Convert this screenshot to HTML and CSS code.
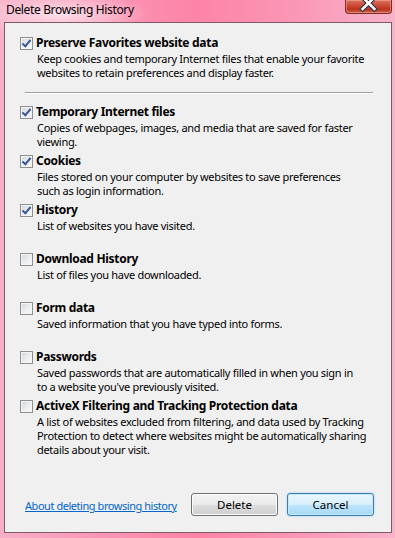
FILE: index.html
```html
<!DOCTYPE html>
<html lang="en">
<head>
    <meta charset="UTF-8">
    <title>Delete Browsing History</title>
    <link rel="stylesheet" href="styles.css">
</head>
<body>
    <div class="window">
        <div class="titlebar">
            <span class="title">Delete Browsing History</span>
            <button class="close-btn" aria-label="Close">
                <svg width="46" height="14" viewBox="0 0 46 14">
                    <path d="M17 -3 L29 9 M29 -3 L17 9" stroke="#3a3a48" stroke-width="5" stroke-linecap="square"/>
                    <path d="M17 -3 L29 9 M29 -3 L17 9" stroke="#fff" stroke-width="2.6" stroke-linecap="square"/>
                </svg>
            </button>
        </div>

        <div class="client">
            <div class="option">
                <label class="option-label"><span class="box checked"></span>Preserve Favorites website data</label>
                <p class="option-desc">Keep cookies and temporary Internet files that enable your favorite<br>websites to retain preferences and display faster.</p>
            </div>

            <hr class="separator">

            <div class="option">
                <label class="option-label"><span class="box checked"></span>Temporary Internet files</label>
                <p class="option-desc">Copies of webpages, images, and media that are saved for faster<br>viewing.</p>
            </div>
            <div class="option">
                <label class="option-label"><span class="box checked"></span>Cookies</label>
                <p class="option-desc">Files stored on your computer by websites to save preferences<br>such as login information.</p>
            </div>
            <div class="option">
                <label class="option-label"><span class="box checked"></span>History</label>
                <p class="option-desc">List of websites you have visited.</p>
            </div>
            <div class="option">
                <label class="option-label"><span class="box"></span>Download History</label>
                <p class="option-desc">List of files you have downloaded.</p>
            </div>
            <div class="option">
                <label class="option-label"><span class="box"></span>Form data</label>
                <p class="option-desc">Saved information that you have typed into forms.</p>
            </div>
            <div class="option">
                <label class="option-label"><span class="box"></span>Passwords</label>
                <p class="option-desc">Saved passwords that are automatically filled in when you sign in<br>to a website you've previously visited.</p>
            </div>
            <div class="option">
                <label class="option-label"><span class="box"></span>ActiveX Filtering and Tracking Protection data</label>
                <p class="option-desc">A list of websites excluded from filtering, and data used by Tracking<br>Protection to detect where websites might be automatically sharing<br>details about your visit.</p>
            </div>

            <div class="footer">
                <a href="#" class="help-link">About deleting browsing history</a>
                <div class="buttons">
                    <button class="btn">Delete</button>
                    <button class="btn btn-default">Cancel</button>
                </div>
            </div>
        </div>
    </div>
</body>
</html>
```

FILE: styles.css
```css
* {
    margin: 0;
    padding: 0;
    box-sizing: border-box;
}
html, body {
    width: 395px;
    height: 538px;
    overflow: hidden;
}
body {
    font-family: "Noto Sans", "Open Sans", sans-serif;
    font-size: 11px;
    color: #000;
}
.window {
    width: 395px;
    height: 538px;
    padding: 0 3px 5px 4px;
    display: flex;
    flex-direction: column;
    background:
        radial-gradient(ellipse 90px 22px at 60px 14px, rgba(255,235,242,0.85), rgba(255,235,242,0) 100%),
        linear-gradient(to right, #f7b0c8 0%, #f996b6 25%, #fd84a6 50%, #fa97b6 75%, #f8b3ca 100%);
}
.titlebar {
    position: relative;
    height: 22px;
    flex-shrink: 0;
}
.title {
    display: block;
    padding: 2px 0 0 2px;
    font-size: 12px;
    letter-spacing: -0.35px;
    line-height: 16px;
    color: #000;
}
.close-btn {
    position: absolute;
    top: 0;
    right: 0;
    width: 47px;
    height: 14px;
    border: 1px solid #7e2b25;
    border-top: none;
    border-radius: 0 0 4px 4px;
    background: linear-gradient(to bottom, #d9725f 0%, #c9452f 50%, #b83220 70%, #d0624a 100%);
    box-shadow: inset 0 0 0 1px rgba(255,190,170,0.45);
    overflow: hidden;
    display: flex;
}
.client {
    flex: 1;
    display: flex;
    flex-direction: column;
    background: #f0f0f0;
    border: 1px solid #7f5a68;
    padding-top: 13px;
}
.option {
    height: 49px;
    padding-left: 15px;
}
.option-label {
    display: flex;
    align-items: center;
    gap: 3px;
    font-size: 12px;
    font-weight: bold;
    letter-spacing: -0.3px;
    line-height: 14px;
}
.option-desc {
    margin-top: 1.7px;
    padding-left: 17px;
    line-height: 14px;
    letter-spacing: -0.3px;
    white-space: nowrap;
}
.box {
    width: 13px;
    height: 13px;
    flex-shrink: 0;
    border: 1px solid #8e8f8f;
    background: linear-gradient(135deg, #d2d6dc 0%, #eceef1 55%, #fafafa 100%);
    box-shadow: inset 0 0 0 1px #f4f4f4;
    position: relative;
}
.box.checked::after {
    content: "";
    position: absolute;
    left: 3px;
    top: 0;
    width: 3px;
    height: 7px;
    border: solid #3b57a0;
    border-width: 0 2px 2px 0;
    transform: rotate(40deg);
}
.separator {
    margin: 7px 18px 11px 20px;
    border: none;
    border-top: 1px solid #a0a0a0;
    border-bottom: 1px solid #ffffff;
}
.footer {
    margin-top: auto;
    display: flex;
    align-items: center;
    justify-content: space-between;
    padding: 0 17px 16px 20px;
}
.help-link {
    color: #0066cc;
    text-decoration: underline;
    letter-spacing: -0.45px;
    white-space: nowrap;
    margin-top: 2px;
}
.buttons {
    display: flex;
    gap: 9px;
}
.btn {
    width: 87px;
    height: 23px;
    font-family: inherit;
    font-size: 11.5px;
    color: #000;
    border: 1px solid #707070;
    border-radius: 3px;
    background: linear-gradient(to bottom, #f2f2f2 0%, #ebebeb 50%, #dddddd 51%, #cfcfcf 100%);
    box-shadow: inset 0 0 0 1px #fcfcfc;
}
.btn-default {
    border-color: #3c7fb1;
    background: linear-gradient(to bottom, #eaf6fd 0%, #d9f0fc 50%, #bee6fd 51%, #a7d9f5 100%);
    box-shadow: inset 0 0 0 1px #c7e8fb, 0 0 2px #7fc6f0;
}
```
